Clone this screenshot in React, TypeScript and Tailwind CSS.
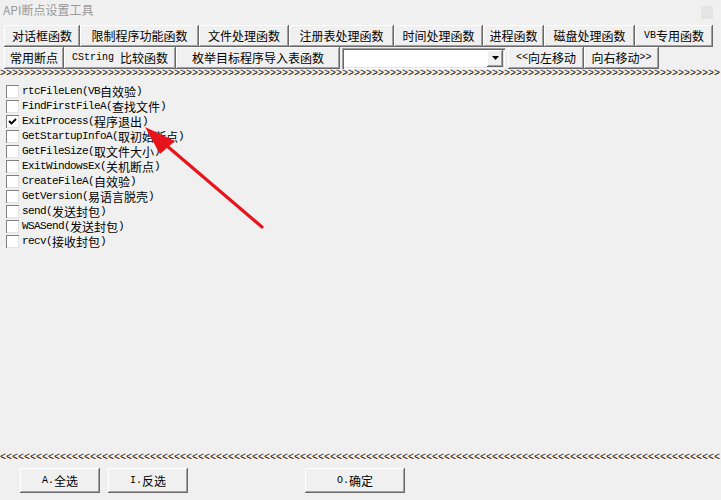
import React from "react"

const cjk = '"Noto Sans CJK SC", "Noto Sans", sans-serif'

// split ascii (drawn in a fixed font) from CJK runs
const Txt = ({ t, big }: { t: string; big?: boolean }) => {
  const parts = t.match(/[\x00-\x7f]+|[^\x00-\x7f]+/g) || []
  return (
    <>
      {parts.map((p, i) =>
        /^[\x00-\x7f]+$/.test(p) ? (
          <span
            key={i}
            className={
              big
                ? "font-['Liberation_Mono',monospace] text-[11px] tracking-[-0.6px] whitespace-pre"
                : "font-['Liberation_Mono',monospace] text-[10px] whitespace-pre"
            }
          >
            {p}
          </span>
        ) : (
          <span key={i} className="text-[12px]" style={{ fontFamily: cjk }}>
            {p}
          </span>
        )
      )}
    </>
  )
}

const bevel =
  "bg-[#f0f0f0] shadow-[inset_-1px_-1px_#696969,inset_1px_1px_#ffffff,inset_-2px_-2px_#a0a0a0] flex items-center justify-center text-black leading-none"

const Btn = ({ label, w, h = "h-[22px]" }: { label: string; w: string; h?: string }) => (
  <div className={`${bevel} ${w} ${h} shrink-0`}>
    <span className="flex items-center">
      <Txt t={label} />
    </span>
  </div>
)

const row1: [string, string][] = [
  ["对话框函数", "w-[76px]"],
  ["限制程序功能函数", "w-[119px]"],
  ["文件处理函数", "w-[90px]"],
  ["注册表处理函数", "w-[105px]"],
  ["时间处理函数", "w-[89px]"],
  ["进程函数", "w-[61px]"],
  ["磁盘处理函数", "w-[91px]"],
  ["VB专用函数", "w-[78px]"],
]

const items = [
  "rtcFileLen(VB自效验)",
  "FindFirstFileA(查找文件)",
  "ExitProcess(程序退出)",
  "GetStartupInfoA(取初始断点)",
  "GetFileSize(取文件大小)",
  "ExitWindowsEx(关机断点)",
  "CreateFileA(自效验)",
  "GetVersion(易语言脱壳)",
  "send(发送封包)",
  "WSASend(发送封包)",
  "recv(接收封包)",
]

const Sep = ({ ch }: { ch: string }) => (
  <div className="h-[9px] overflow-hidden whitespace-nowrap font-['Liberation_Mono',monospace] text-[10px] leading-[9px] text-[#111]">
    {ch.repeat(120)}
  </div>
)

export default function App() {
  return (
    <div className="relative w-[721px] h-[500px] bg-[#f0f0f0] flex flex-col overflow-hidden select-none">
      <div className="h-[25px] flex items-start justify-between pl-[3px] pr-[8px] pt-[3px]">
        <span className="text-[12px] text-[#9a9a9a] leading-[14px]" style={{ fontFamily: cjk }}>
          API断点设置工具
        </span>
        <div className="w-[12px] h-[13px] mt-[3px] bg-[#e4e4e4]" />
      </div>

      <div className="flex pl-[4px] h-[22px]">
        {row1.map(([l, w]) => (
          <Btn key={l} label={l} w={w} />
        ))}
      </div>

      <div className="flex pl-[4px] h-[22px] items-center">
        <Btn label="常用断点" w="w-[60px]" />
        <Btn label="CString 比较函数" w="w-[112px]" />
        <Btn label="枚举目标程序导入表函数" w="w-[164px]" />
        <div className="ml-[2px] mr-[3px] w-[163px] h-[21px] bg-white shadow-[inset_1px_1px_#a0a0a0,inset_2px_2px_#696969,inset_-1px_-1px_#ffffff,inset_-2px_-2px_#e3e3e3] flex justify-end items-center pr-[2px]">
          <div className={`${bevel} w-[16px] h-[17px]`}>
            <svg width="7" height="4" viewBox="0 0 7 4">
              <path d="M0 0h7L3.5 4z" fill="#000" />
            </svg>
          </div>
        </div>
        <Btn label="<<向左移动" w="w-[76px]" />
        <Btn label="向右移动>>" w="w-[75px]" />
      </div>

      <Sep ch=">" />

      <div className="flex flex-col pt-[6px] pl-[6px]">
        {items.map((it, i) => (
          <div key={it} className="flex items-center h-[15px]">
            <div className="w-[13px] h-[13px] bg-white shadow-[inset_1px_1px_#808080,inset_-1px_-1px_#e3e3e3] flex items-center justify-center">
              {i === 2 && (
                <svg width="9" height="9" viewBox="0 0 9 9">
                  <path d="M1 4l2.5 2.5L8 2" stroke="#000" strokeWidth="1.8" fill="none" />
                </svg>
              )}
            </div>
            <span className="ml-[3px] flex items-center leading-none text-black">
              <Txt t={it} big />
            </span>
          </div>
        ))}
      </div>

      <div className="flex-1" />

      <Sep ch="<" />

      <div className="flex h-[25px] mt-[6px] mb-[7px] pl-[20px]">
        <Btn label="A.全选" w="w-[80px]" h="h-[25px]" />
        <div className="w-[8px]" />
        <Btn label="I.反选" w="w-[80px]" h="h-[25px]" />
        <div className="w-[117px]" />
        <Btn label="O.确定" w="w-[100px]" h="h-[25px]" />
      </div>

      <svg className="absolute left-0 top-0 pointer-events-none" width="721" height="500">
        <line x1="262" y1="227" x2="160" y2="140" stroke="#e8141b" strokeWidth="3.2" strokeLinecap="round" />
        <path d="M145 127 L175 141 L160 154 Z" fill="#e8141b" />
      </svg>
    </div>
  )
}
